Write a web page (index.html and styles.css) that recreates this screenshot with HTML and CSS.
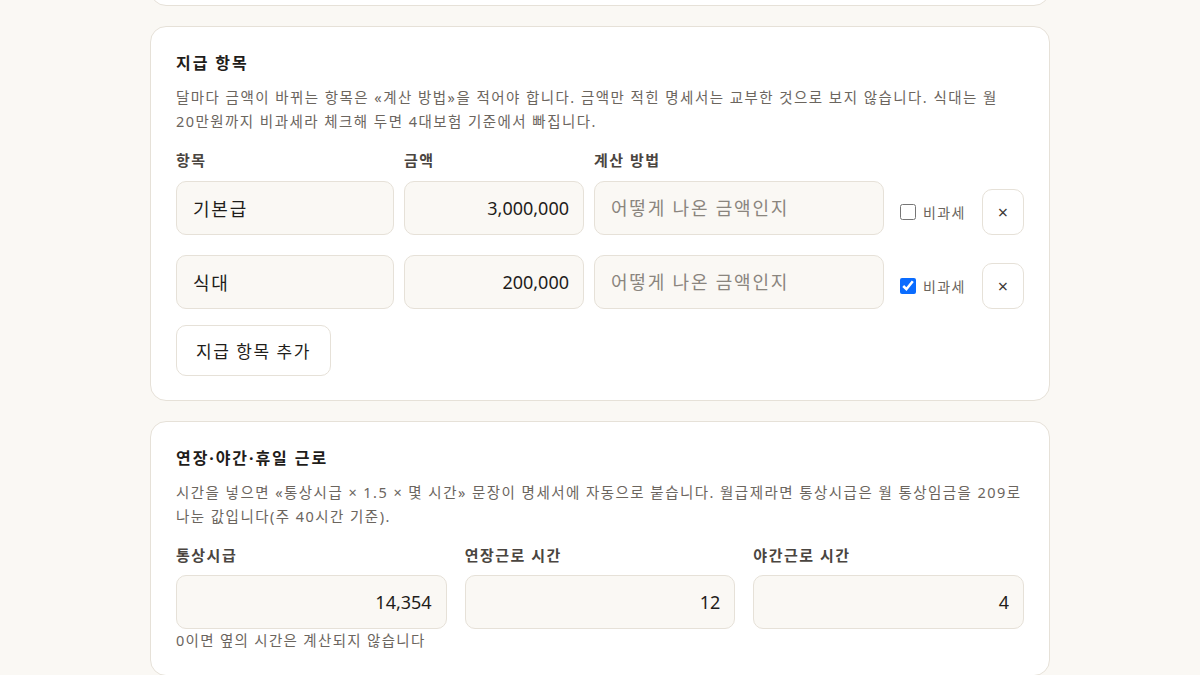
FILE: index.html
```html
<!DOCTYPE html>
<html lang="ko">
<head>
<meta charset="utf-8">
<title>급여명세서</title>
<link rel="stylesheet" href="styles.css">
</head>
<body>
<main class="page">
  <section class="card card-prev"></section>

  <section class="card">
    <h2 class="card-title">지급 항목</h2>
    <p class="card-desc">달마다 금액이 바뀌는 항목은 «계산 방법»을 적어야 합니다. 금액만 적힌 명세서는 교부한 것으로 보지 않습니다. 식대는 월 20만원까지 비과세라 체크해 두면 4대보험 기준에서 빠집니다.</p>
    <div class="pay-head">
      <span class="label">항목</span>
      <span class="label">금액</span>
      <span class="label">계산 방법</span>
    </div>
    <div class="pay-row">
      <input class="field" type="text" value="기본급">
      <input class="field num" type="text" value="3,000,000">
      <input class="field" type="text" placeholder="어떻게 나온 금액인지">
      <label class="taxfree"><input type="checkbox" class="chk"><span>비과세</span></label>
      <button class="remove" type="button">×</button>
    </div>
    <div class="pay-row">
      <input class="field" type="text" value="식대">
      <input class="field num" type="text" value="200,000">
      <input class="field" type="text" placeholder="어떻게 나온 금액인지">
      <label class="taxfree"><input type="checkbox" class="chk" checked><span>비과세</span></label>
      <button class="remove" type="button">×</button>
    </div>
    <button class="add-btn" type="button">지급 항목 추가</button>
  </section>

  <section class="card">
    <h2 class="card-title">연장·야간·휴일 근로</h2>
    <p class="card-desc">시간을 넣으면 «통상시급 × 1.5 × 몇 시간» 문장이 명세서에 자동으로 붙습니다. 월급제라면 통상시급은 월 통상임금을 209로 나눈 값입니다(주 40시간 기준).</p>
    <div class="ot-grid">
      <div class="ot-col">
        <span class="label">통상시급</span>
        <input class="field num" type="text" value="14,354">
        <span class="hint">0이면 옆의 시간은 계산되지 않습니다</span>
      </div>
      <div class="ot-col">
        <span class="label">연장근로 시간</span>
        <input class="field num" type="text" value="12">
      </div>
      <div class="ot-col">
        <span class="label">야간근로 시간</span>
        <input class="field num" type="text" value="4">
      </div>
    </div>
  </section>
</main>
</body>
</html>
```
FILE: styles.css
```css
* { box-sizing: border-box; }

html, body {
  margin: 0;
  padding: 0;
  background: #faf8f4;
  font-family: "Noto Sans", "Noto Sans CJK KR", sans-serif;
  color: #1f1d1a;
  word-break: keep-all;
}

.page {
  width: 900px;
  margin: 0 auto;
  display: flex;
  flex-direction: column;
  gap: 20px;
}

.card {
  background: #ffffff;
  border: 1px solid #e6e1d8;
  border-radius: 16px;
  padding: 24px 25px;
}

.card-prev {
  height: 80px;
  margin-top: -74px;
}

.card-title {
  margin: 0;
  font-size: 16px;
  line-height: 24px;
  font-weight: 700;
  letter-spacing: 0.12em;
  color: #1f1d1a;
}

.card-desc {
  margin: 10px 0 0;
  font-size: 14.5px;
  line-height: 24px;
  letter-spacing: 0.1em;
  color: #6b655e;
}

.label {
  display: block;
  font-size: 15px;
  line-height: 24px;
  font-weight: 700;
  letter-spacing: 0.1em;
  color: #4a4540;
}

.pay-head {
  display: grid;
  grid-template-columns: 218px 180px 290px;
  gap: 10px;
  margin-top: 15px;
}

.pay-row {
  display: grid;
  grid-template-columns: 218px 180px 290px 1fr 42px;
  gap: 10px;
  align-items: end;
  margin-top: 9px;
}

.pay-row + .pay-row { margin-top: 20px; }

.field {
  display: block;
  width: 100%;
  height: 54px;
  padding: 0 14px 0 16px;
  border: 1px solid #e6e1d8;
  border-radius: 10px;
  background: #faf8f4;
  font-family: "Noto Sans", "Noto Sans CJK KR", sans-serif;
  font-size: 18px;
  letter-spacing: 0.1em;
  color: #1f1d1a;
  outline: none;
}

.field::placeholder { color: #8a857e; }

.field.num {
  text-align: right;
  letter-spacing: 0;
}

.taxfree {
  display: flex;
  align-items: center;
  gap: 7px;
  height: 46px;
  padding-left: 6px;
  font-size: 14px;
  letter-spacing: 0.1em;
  color: #6b655e;
}

.chk {
  width: 16px;
  height: 16px;
  margin: 0;
  accent-color: #0a6cff;
}

.remove {
  width: 42px;
  height: 46px;
  border: 1px solid #e6e1d8;
  border-radius: 10px;
  background: #ffffff;
  font-family: "Noto Sans", sans-serif;
  font-size: 18px;
  color: #3d3935;
  padding: 0;
}

.add-btn {
  margin-top: 16px;
  align-self: flex-start;
  height: 51px;
  padding: 0 19px;
  border: 1px solid #e6e1d8;
  border-radius: 10px;
  background: #ffffff;
  font-family: "Noto Sans", "Noto Sans CJK KR", sans-serif;
  font-size: 17px;
  letter-spacing: 0.09em;
  color: #1f1d1a;
}

.ot-grid {
  display: grid;
  grid-template-columns: repeat(3, 1fr);
  gap: 18px;
  margin-top: 15px;
}

.ot-col {
  display: flex;
  flex-direction: column;
  gap: 8px;
}

.hint {
  margin-top: -8px;
  font-size: 14.5px;
  line-height: 22px;
  letter-spacing: 0.09em;
  color: #6b655e;
}
```
